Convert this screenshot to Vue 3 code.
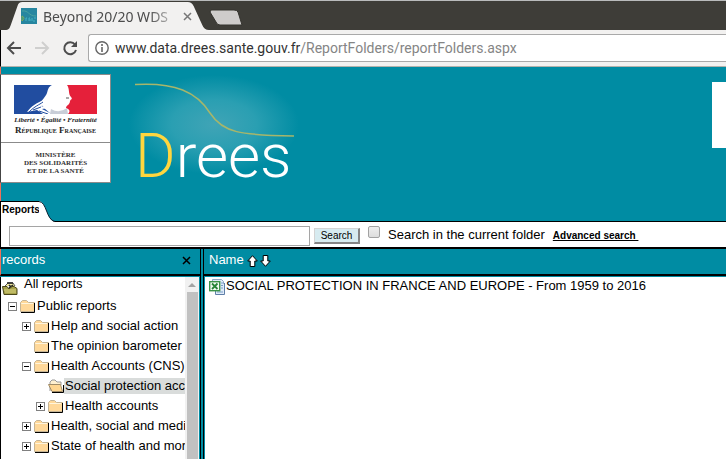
<script setup>
import { ref } from 'vue'

const query = ref('')
const currentOnly = ref(false)
const folders = [
  { label: 'Public reports', level: 0, toggle: '-' },
  { label: 'Help and social action', level: 1, toggle: '+' },
  { label: 'The opinion barometer', level: 1, toggle: '' },
  { label: 'Health Accounts (CNS)', level: 1, toggle: '-' },
  { label: 'Social protection acc', level: 2, toggle: '', open: true },
  { label: 'Health accounts', level: 2, toggle: '+' },
  { label: 'Health, social and medi', level: 1, toggle: '+' },
  { label: 'State of health and mor', level: 1, toggle: '+' },
]
</script>

<template>
  <div class="window">
    <header class="tabstrip">
      <div class="tab">
        <svg class="tab-shape" viewBox="0 0 212 28" preserveAspectRatio="none" aria-hidden="true">
          <path d="M0 28C4 28 5 26 6 23L13 4Q14 0 18 0H190Q194 0 196 4L205 23Q207 28 212 28Z" fill="#f2f1f0" />
        </svg>
        <svg class="favicon" viewBox="0 0 16 16" aria-hidden="true">
          <rect width="16" height="16" fill="#2786a0" />
          <path d="M1 3C8 2 7 8 15 8" stroke="#4aa3a0" fill="none" />
          <path d="M1 8V13M1 8Q5 10 1 13" stroke="#7fae55" fill="none" />
          <path d="M5 13V10H6M8 13V10H9M8 12H10M11 13V10M13 10H15M12 13H14" stroke="#45b3c4" fill="none" />
        </svg>
        <span class="tab-title">Beyond 20/20 WDS</span>
        <button class="tab-close" aria-label="Close tab">
          <svg width="9" height="9" viewBox="0 0 9 9"><path d="M1 1L8 8M8 1L1 8" stroke="#777" stroke-width="1.5" /></svg>
        </button>
      </div>
      <button class="new-tab" aria-label="New tab">
        <svg width="34" height="17" viewBox="0 0 34 17"><path d="M2 1H25Q28 1 29 3L33 16H11Q8 16 7 13L1 3Z" fill="#cecccb" stroke="#35342f" /></svg>
      </button>
    </header>

    <nav class="toolbar">
      <button class="nav-btn" aria-label="Back">
        <svg width="16" height="16" viewBox="0 0 16 16"><path d="M15 8H2M8 2L2 8L8 14" fill="none" stroke="#4d4d4d" stroke-width="2" /></svg>
      </button>
      <button class="nav-btn" aria-label="Forward">
        <svg width="16" height="16" viewBox="0 0 16 16"><path d="M1 8H14M8 2L14 8L8 14" fill="none" stroke="#cfcfce" stroke-width="2" /></svg>
      </button>
      <button class="nav-btn" aria-label="Reload">
        <svg width="16" height="16" viewBox="0 0 16 16"><path d="M13 4.500A6 6 0 1 0 14 10" fill="none" stroke="#4d4d4d" stroke-width="2" /><path d="M15 1V7H9Z" fill="#4d4d4d" /></svg>
      </button>
      <div class="address">
        <svg width="14" height="14" viewBox="0 0 14 14" aria-hidden="true"><circle cx="7" cy="7" r="6.200" fill="none" stroke="#666" stroke-width="1.400" /><path d="M7 6V11M7 3V5" stroke="#666" stroke-width="1.600" /></svg>
        <span class="url">www.data.drees.sante.gouv.fr<span class="path">/ReportFolders/reportFolders.aspx</span></span>
      </div>
    </nav>

    <main class="page">
      <section class="banner">
        <div class="republic">
          <div class="republic-top">
            <svg class="flag" viewBox="0 0 83 29" aria-hidden="true">
              <rect width="83" height="29" fill="#fff" />
              <path d="M0 0H38C34 2 34 5 33 8C31 13 28 14 27 18L30 23L37 29H0Z" fill="#214da0" />
              <path d="M53 0H83V29H54C57 26 55 24 52 23C52 20 56 20 56 16C57 14 59 14 57 12C54 9 56 4 53 0Z" fill="#e5203a" />
              <path d="M13 27C17 21 23 18 31 14L29 18L33 20L27 21L34 23L28 24L38 29H29L23 25Z" fill="#fff" />
              <path d="M15 27C21 21 25 20 29 17M19 25L27 22M25 26L34 29" fill="none" stroke="#214da0" />
              <path d="M37 24Q45 29 53 23L54 29H36Z" fill="#c9ced8" />
              <path d="M52 13H55" stroke="#555" />
            </svg>
            <div class="motto">Liberté • Égalité • Fraternité</div>
            <div class="country">République Française</div>
          </div>
          <div class="ministry">MINISTÈRE<br>DES SOLIDARITÉS<br>ET DE LA SANTÉ</div>
        </div>
        <div class="drees">
          <svg class="curve" viewBox="0 0 160 46" aria-hidden="true"><path d="M0 1.500C40 -1 62 9 75 30C88 50 105 52 159 53" fill="none" stroke="#a7b66b" stroke-width="1.500" /></svg>
          <div class="wordmark"><span>D</span>rees</div>
        </div>
        <div class="side-box"></div>
      </section>

      <div class="page-tabs">
        <a class="reports-tab" href="#">Reports</a>
        <svg class="tab-edge" viewBox="0 0 16 21" aria-hidden="true"><path d="M0 0C8 1 7 19 16 21H0Z" fill="#fff" /><path d="M0 .5C8 1 7 19 16 20.500" fill="none" stroke="#123" /></svg>
      </div>

      <form class="search" @submit.prevent>
        <input v-model="query" class="search-text" type="text" aria-label="Search reports">
        <button class="search-btn">Search</button>
        <input id="current" v-model="currentOnly" class="check" type="checkbox">
        <label for="current">Search in the current folder</label>
        <a class="advanced" href="#">Advanced search&nbsp;</a>
      </form>

      <div class="panels">
        <aside class="left">
          <div class="panel-head">
            <span>records</span>
            <button class="close" aria-label="Close records"><svg width="9" height="9" viewBox="0 0 9 9"><path d="M1 1L8 8M8 1L1 8" stroke="#000" stroke-width="1.500" /></svg></button>
          </div>
          <div class="tree-wrap">
            <div class="tree">
              <a class="all" href="#">
                <svg width="16" height="16" viewBox="0 0 16 16" aria-hidden="true">
                  <path d="M3 6L6 3H11L13 6" fill="#eee8a0" stroke="#555" /><path d="M5 3H11M7 5L11 9M11 5L7 8" fill="none" stroke="#222" stroke-width="1.500" />
                  <path d="M.5 6.500H5L7 9L10 6.500H12L15 8.500V14.500H2Z" fill="#a7a24a" stroke="#4b481c" /><path d="M2 10H14M3 12H14" stroke="#d8d380" />
                </svg>
                <span>All reports</span>
              </a>
              <div v-for="f in folders" :key="f.label" class="row" :class="'level-' + f.level">
                <button v-if="f.toggle" class="toggle" :aria-label="f.toggle === '+' ? 'Expand' : 'Collapse'">
                  <svg width="9" height="9" viewBox="0 0 9 9"><rect x=".5" y=".5" width="8" height="8" fill="#fff" stroke="#808080" /><path :d="f.toggle === '+' ? 'M2 4.500H7M4.500 2V7' : 'M2 4.500H7'" stroke="#000" /></svg>
                </button>
                <span v-else class="toggle"></span>
                <svg v-if="f.open" class="folder" viewBox="0 0 16 14" aria-hidden="true">
                  <path d="M2 12V3L4 1H7L9 3H13V6" fill="#fff0cf" stroke="#999" /><path d="M0.500 5.500H12.500L14.500 12.500H4Z" fill="#ffd690" stroke="#a08c68" /><path d="M4 13.500H15.500V6" fill="none" stroke="#000" />
                </svg>
                <svg v-else class="folder" viewBox="0 0 16 14" aria-hidden="true">
                  <path d="M.5 12.500V3.500L2.500 1.500H6.500L8.500 3.500H14.500V12.500Z" fill="#ffd899" stroke="#c4b496" /><path d="M1.500 5V4.500H13" fill="none" stroke="#fff5dc" /><path d="M1 13.500H14.500V4" fill="none" stroke="#000" />
                </svg>
                <a href="#" :class="{ selected: f.open }">{{ f.label }}</a>
              </div>
            </div>
            <div class="scrollbar" aria-hidden="true"><i class="arrow"></i><i class="thumb"></i></div>
          </div>
        </aside>
        <section class="right">
          <div class="panel-head">
            <span>Name</span>
            <button class="sort" aria-label="Sort ascending"><svg width="11" height="12" viewBox="0 0 11 12"><path d="M5.500 .7L10.300 6H7.800V11.500H3.200V6H.7Z" fill="#fff" stroke="#000" /></svg></button>
            <button class="sort" aria-label="Sort descending"><svg width="11" height="12" viewBox="0 0 11 12"><path d="M5.500 11.300L.7 6H3.200V.5H7.800V6H10.300Z" fill="#fff" stroke="#000" /></svg></button>
          </div>
          <div class="results">
            <a class="result" href="#">
              <svg width="16" height="16" viewBox="0 0 16 16" aria-hidden="true">
                <path d="M3.500 .5H12.500L14.500 2.500V11.500H3.500Z" fill="#dfeaf8" stroke="#8da5c4" /><path d="M6.500 11.500V15.500H15.500V4" fill="#dfeaf8" stroke="#5f7fa8" /><path d="M12 4H14M12 6.500H14M12 9H14M8 13H14" stroke="#7aa0c8" />
                <rect x=".7" y="2.700" width="10" height="9" fill="#f4fbf4" stroke="#3c9348" stroke-width="1.400" /><path d="M3 4.500L8.500 10M8.500 4.500L3 10" stroke="#278437" stroke-width="1.800" />
              </svg>
              <span>SOCIAL PROTECTION IN FRANCE AND EUROPE - From 1959 to 2016</span>
            </a>
          </div>
        </section>
      </div>
    </main>
  </div>
</template>

<style>
html, body, #app { height: 100%; }
body { margin: 0; overflow: hidden; }
</style>

<style scoped>
* { box-sizing: border-box; }
button { padding: 0; border: 0; background: none; display: flex; align-items: center; justify-content: center; }
a { color: inherit; text-decoration: none; }
svg { flex: none; display: block; }
.window { min-height: 100%; display: flex; flex-direction: column; font-family: "Liberation Sans", Arial, sans-serif; font-size: 13px; color: #000; background: #fff; }
.tabstrip { height: 30px; flex: none; display: flex; padding: 0 0 0 5px; align-items: flex-end; background: #3e3d38; border-top: 1px solid #b9bbbc; }
.tab { position: relative; width: 204px; height: 28px; display: flex; align-items: center; padding-left: 16px; font-family: "Noto Sans", sans-serif; font-size: 14px; color: #4c4c4c; }
.tab-shape { position: absolute; inset: 0; width: 100%; height: 100%; }
.favicon { position: relative; width: 16px; height: 16px; margin-right: 6px; }
.tab-title { position: relative; width: 132px; overflow: hidden; white-space: nowrap; mask-image: linear-gradient(to right, #000 80%, transparent 105%); }
.tab-close { position: relative; width: 24px; height: 20px; }
.new-tab { width: 34px; height: 26px; }
.toolbar { height: 37px; flex: none; display: flex; align-items: center; gap: 12px; padding: 0 0 0 5px; background: #f2f1f0; border-left: 1px solid #000; border-bottom: 1px solid #b3b2ac; }
.nav-btn { width: 16px; height: 28px; }
.address { flex: 1; height: 28px; margin-left: -2px; display: flex; align-items: center; gap: 6px; padding-left: 6px; border: 1px solid #a9a9a9; border-right: 0; border-radius: 3px 0 0 3px; background: #fff; }
.url { font-family: Roboto, sans-serif; font-size: 14px; color: #333; white-space: nowrap; }
.path { color: #858585; }
.page { flex: 1; display: flex; flex-direction: column; background: #008ca3; }
.banner { flex: none; height: 134px; display: flex; align-items: flex-start; padding-top: 7px; border-left: 1px solid #f0705a; }
.republic { width: 111px; margin-left: -1px; border: 1px solid #8b8b8b; border-left-color: #444; background: #fff; text-align: center; font-family: "Liberation Serif", serif; color: #222; }
.republic-top { height: 68px; padding-top: 10px; border-bottom: 1px solid #8b8b8b; }
.flag { width: 83px; height: 29px; margin: 0 auto; }
.motto { font-size: 7px; line-height: 12px; font-style: italic; font-weight: bold; }
.country { font-size: 9px; line-height: 9px; font-weight: bold; font-variant: small-caps; white-space: nowrap; }
.ministry { height: 39px; padding-top: 8px; font-size: 7px; line-height: 8px; font-weight: bold; color: #333; }
.drees { width: 170px; height: 118px; margin: 1px 0 0 18px; padding: 8px 6px 0; background: radial-gradient(ellipse closest-side at 50% 42%, #40a4b6 0%, #2a9fb2 50%, #008ca3 100%); }
.curve { width: 160px; height: 46px; overflow: visible; }
.wordmark { font-family: Roboto, sans-serif; font-weight: 300; font-size: 62px; line-height: 54px; color: #fff; white-space: nowrap; }
.wordmark span { color: #ffd63e; }
.side-box { width: 14px; height: 66px; margin: 8px 0 0 auto; background: #fff; }
.page-tabs { flex: none; height: 21px; display: flex; border-bottom: 1px solid #000; border-left: 1px solid #000; }
.reports-tab { height: 21px; width: 38px; padding: 2px 0 0 1px; border-top: 1px solid #000; background: #fff; font-size: 10px; line-height: 12px; font-weight: bold; }
.tab-edge { width: 16px; height: 21px; }
.search { flex: none; height: 27px; display: flex; align-items: center; padding-left: 8px; background: #fff; border-left: 1px solid #000; border-bottom: 2px solid #000; }
.search-text { width: 301px; height: 20px; border: 1px solid #a5a5a5; background: #fff; margin: 2px 4px 0 0; }
.search-btn { width: 46px; height: 16px; margin: 2px 8px 0 0; border: 1px outset #d4d4d4; border-right: 2px solid #858585; border-bottom: 2px solid #858585; background: #d7ebf0; font: 10px "Liberation Sans", sans-serif; }
.check { appearance: none; width: 12px; height: 12px; margin: 0 8px 6px 0; border: 1px solid #a2a2a2; border-radius: 2px; background: linear-gradient(#eee, #ddd); }
.advanced { margin-left: 8px; padding-top: 2px; font-size: 10px; line-height: 12px; font-weight: bold; text-decoration: underline; }
.panels { flex: 1; display: flex; gap: 2px; }
.left { width: 201px; flex: none; display: flex; flex-direction: column; border-right: 1px solid #000; }
.right { flex: 1; min-width: 0; display: flex; flex-direction: column; border-left: 1px solid #000; }
.panel-head { flex: none; height: 27px; display: flex; align-items: center; padding: 0 9px 4px 1px; color: #fff; border-bottom: 2px solid #000; }
.left .panel-head { border-left: 1px solid #f0705a; }
.right .panel-head { padding-left: 5px; gap: 2px; }
.right .panel-head span { margin-right: 1px; }
.sort { padding-top: 2px; }
.close { margin-left: auto; padding-top: 2px; }
.tree-wrap { flex: 1; display: flex; margin: 1px 1px 0 0; background: #fff; border-left: 1px solid #000; }
.tree { flex: 1; min-width: 0; overflow: hidden; white-space: nowrap; }
.all { display: flex; align-items: center; gap: 6px; height: 19px; padding-left: 1px; }
.all svg { align-self: flex-end; }
.all span { line-height: 14px; padding-bottom: 5px; }
.row { display: flex; align-items: center; height: 20px; }
.level-0 { padding-left: 7px; }
.level-1 { padding-left: 21px; }
.level-2 { padding-left: 35px; }
.toggle { width: 9px; height: 9px; flex: none; margin-right: 3px; }
.folder { width: 16px; height: 14px; }
.row a { padding-left: 1px; line-height: 16px; }
.row .selected { flex: 1; background: #d9dcdb; }
.scrollbar { width: 14px; flex: none; display: flex; flex-direction: column; align-items: center; background: #f1f1f1; }
.arrow { margin: 6px 0 5px; border: 4px solid transparent; border-top: 0; border-bottom-color: #a3a3a3; }
.thumb { flex: 1; width: 11px; background: #c1c1c1; }
.results { flex: 1; margin: 1px 0 0 1px; padding: 2px 0 0 4px; background: #fff; }
.result { display: flex; align-items: flex-start; gap: 1px; white-space: nowrap; }
.result span { line-height: 14px; }
</style>
